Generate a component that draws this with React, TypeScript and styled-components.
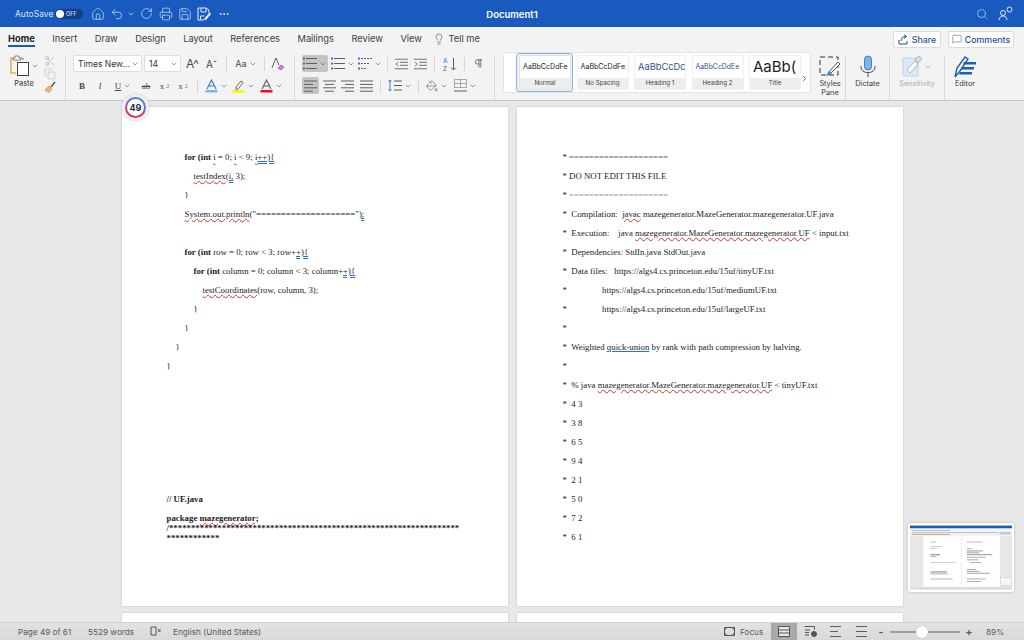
import React from 'react';
import styled, { createGlobalStyle } from 'styled-components';
import {
  House,
  Undo2,
  RotateCw,
  Printer,
  Save,
  Ellipsis,
  Search,
  Lightbulb,
  MessageSquare,
  Scissors,
  Copy,
  ChevronDown,
  ChevronRight,
  Pilcrow,
  PaintBucket,
} from 'lucide-react';

const Global = createGlobalStyle`
  html, body { margin: 0; padding: 0; background: #e8e8e8; }
  * { box-sizing: border-box; }
`;

const Window = styled.div`
  position: relative;
  display: flex;
  flex-direction: column;
  width: 1024px;
  height: 640px;
  overflow: hidden;
  font-family: Inter, 'Liberation Sans', sans-serif;
  color: #3a3a3a;
`;

const TitleBar = styled.div`
  display: flex;
  align-items: center;
  flex: 0 0 27px;
  padding-left: 15px;
  background: #185abd;
  color: #fff;
`;

const AutoSave = styled.span`
  font-size: 8.5px;
  color: #d5e1f3;
  width: 40px;
`;

const Toggle = styled.div`
  display: flex;
  align-items: center;
  width: 28px;
  height: 10px;
  padding-left: 1px;
  gap: 2px;
  border-radius: 5px;
  background: #123f86;
  color: #b9cbe8;
  font-size: 5.5px;
  font-weight: 600;
  margin-right: 5px;
`;

const Knob = styled.i`
  width: 8px;
  height: 8px;
  border-radius: 50%;
  background: #fff;
`;

const QuickButton = styled.div<{ $w?: number }>`
  display: flex;
  align-items: center;
  justify-content: center;
  width: ${(p) => p.$w ?? 19}px;
  color: #e4ecf8;
`;

const DocTitle = styled.div`
  position: absolute;
  left: 0;
  right: 0;
  top: 9px;
  text-align: center;
  font-size: 9.5px;
  font-weight: 600;
`;

const TitleRight = styled.div`
  display: flex;
  align-items: center;
  gap: 4px;
  margin-left: auto;
  padding-right: 7px;
`;

const TabBar = styled.div`
  display: flex;
  align-items: center;
  flex: 0 0 23px;
  padding: 0 10px 0 8px;
  background: #f3f3f3;
`;

const Tab = styled.div<{ $active?: boolean }>`
  position: relative;
  margin-right: 17.5px;
  font-size: 9.3px;
  font-weight: ${(p) => (p.$active ? 700 : 400)};
  color: ${(p) => (p.$active ? '#222' : '#404040')};
  line-height: 23px;
  &::after {
    content: '';
    display: ${(p) => (p.$active ? 'block' : 'none')};
    position: absolute;
    left: 0;
    right: 0;
    bottom: 3px;
    height: 2px;
    background: #1f5aa8;
  }
`;

const TellMe = styled.div`
  display: flex;
  align-items: center;
  gap: 3px;
  margin-left: -6px;
  font-size: 9.3px;
  color: #404040;
`;

const TabActions = styled.div`
  display: flex;
  gap: 7px;
  margin-left: auto;
  margin-top: 1px;
`;

const ActionButton = styled.div<{ $w: number }>`
  display: flex;
  align-items: center;
  justify-content: center;
  gap: 3px;
  width: ${(p) => p.$w}px;
  height: 17px;
  background: #fff;
  border: 1px solid #dcdcdc;
  border-radius: 2px;
  font-size: 8.8px;
  font-weight: 500;
  color: #1f4f93;
`;

const Ribbon = styled.div`
  display: flex;
  flex: 0 0 51px;
  background: #f3f3f3;
  border-bottom: 1px solid #c9c9c9;
`;

const Group = styled.div<{ $w: number; $pad?: number }>`
  display: flex;
  flex-direction: column;
  gap: 5px;
  width: ${(p) => p.$w}px;
  height: 45px;
  margin-top: 5px;
  padding-left: ${(p) => p.$pad ?? 0}px;
  border-right: 1px solid #d8d8d8;
`;

const PasteGroup = styled.div`
  display: flex;
  width: 66px;
  height: 45px;
  margin-top: 5px;
  border-right: 1px solid #d8d8d8;
`;

const PasteMain = styled.div`
  display: flex;
  flex-direction: column;
  align-items: center;
  width: 42px;
  padding-left: 6px;
  font-size: 7.5px;
  color: #333;
  gap: 3px;
`;

const PasteIconRow = styled.div`
  display: flex;
  align-items: center;
  gap: 1px;
`;

const ClipColumn = styled.div`
  display: flex;
  flex-direction: column;
  align-items: center;
  width: 16px;
  gap: 1px;
`;

const ToolRow = styled.div`
  display: flex;
  align-items: center;
  height: 17px;
`;

const FontSelect = styled.div<{ $w: number }>`
  display: flex;
  align-items: center;
  justify-content: space-between;
  width: ${(p) => p.$w}px;
  height: 17px;
  margin-right: 2px;
  padding: 0 2px 0 4px;
  background: #fff;
  border: 1px solid #dedede;
  border-radius: 2px;
  font-size: 8.5px;
  color: #333;
`;

const Tool = styled.div<{ $w: number; $on?: boolean; $serif?: boolean; $size?: number }>`
  display: flex;
  align-items: center;
  justify-content: center;
  gap: 2px;
  width: ${(p) => p.$w}px;
  height: 17px;
  background: ${(p) => (p.$on ? '#c4c4c4' : 'transparent')};
  border-radius: 2px;
  font-size: ${(p) => p.$size ?? 9}px;
  color: #4a4a4a;
  font-family: ${(p) => (p.$serif ? "'Liberation Serif', serif" : 'inherit')};
`;

const Bold = styled.b`
  font-weight: 700;
`;

const Slanted = styled.i`
  font-style: italic;
`;

const Script = styled.span`
  font-size: 6px;
  color: #2f7ad0;
`;

const Divider = styled.i<{ $m: number }>`
  flex: 0 0 1px;
  height: 14px;
  margin: 0 ${(p) => p.$m}px;
  background: #d4d4d4;
`;

const Gallery = styled.div`
  position: relative;
  display: flex;
  align-items: flex-start;
  gap: 7.5px;
  width: 308px;
  height: 41px;
  margin: 2px 4px 0 8px;
  padding: 3px 0 0 16px;
  background: #fff;
  border: 1px solid #e4e4e4;
  border-radius: 3px;
`;

const StyleCard = styled.div`
  position: relative;
  display: flex;
  flex-direction: column;
  flex: 0 0 50px;
  height: 33px;
  overflow: hidden;
  box-shadow: 0 0 1px #aaa;
`;

const SelectedRing = styled.div`
  position: absolute;
  left: 12px;
  top: 0;
  width: 57px;
  height: 39px;
  border: 1px solid #8fb0d8;
  border-radius: 3px;
  background: #e9f0f8;
`;

const Preview = styled.div<{ $size: number; $color?: string }>`
  flex: 0 0 22px;
  padding: 0 0 0 3px;
  background: #fff;
  font-size: ${(p) => p.$size}px;
  line-height: 22px;
  color: ${(p) => p.$color ?? '#222'};
  white-space: nowrap;
`;

const CardName = styled.div`
  flex: 1;
  background: #eeeeee;
  text-align: center;
  font-size: 6.2px;
  line-height: 10px;
  color: #444;
`;

const GalleryNext = styled.div`
  position: absolute;
  right: 1px;
  top: 14px;
  color: #444;
`;

const BigTool = styled.div<{ $w: number; $dim?: boolean; $edge?: boolean }>`
  display: flex;
  flex-direction: column;
  align-items: center;
  width: ${(p) => p.$w}px;
  height: 45px;
  margin-top: 5px;
  font-size: 7.3px;
  line-height: 9px;
  text-align: center;
  color: ${(p) => (p.$dim ? '#a9a9a9' : '#3a3a3a')};
  border-right: ${(p) => (p.$edge ? '1px solid #d8d8d8' : 'none')};
`;

const BigIcon = styled.div`
  display: flex;
  align-items: center;
  justify-content: center;
  height: 23px;
  margin-bottom: 1px;
`;

const DocArea = styled.div`
  flex: 1;
  min-height: 0;
  overflow: hidden;
  display: flex;
  flex-direction: column;
  align-items: center;
  gap: 7px;
  padding-top: 6px;
  background: #e8e8e8;
`;

const Spread = styled.div`
  display: flex;
  gap: 9px;
`;

const Page = styled.div<{ $h?: number; $left?: number }>`
  flex: 0 0 auto;
  width: 386px;
  height: ${(p) => p.$h ?? 499}px;
  padding: 41px 0 0 ${(p) => p.$left ?? 45}px;
  background: #fff;
  box-shadow: 0 0 2px #bdbdbd;
  font-family: 'Liberation Serif', serif;
  font-size: 8.8px;
  color: #1c1c1c;
`;

const Line = styled.div<{ $indent?: number; $bold?: boolean; $h?: number; $top?: number }>`
  height: ${(p) => p.$h ?? 19}px;
  margin-top: ${(p) => p.$top ?? 0}px;
  line-height: ${(p) => p.$h ?? 19}px;
  padding-left: ${(p) => (p.$indent ?? 0) * 9}px;
  font-weight: ${(p) => (p.$bold ? 700 : 400)};
  white-space: pre;
`;

const Spell = styled.span`
  text-decoration: underline wavy #d0342c;
  text-decoration-thickness: 0.7px;
  text-underline-offset: 1px;
`;

const Grammar = styled.span`
  text-decoration: underline double #2b6fd8;
  text-decoration-thickness: 0.7px;
  text-underline-offset: 1px;
`;

const Link = styled.span`
  text-decoration: underline #2b6fd8;
  text-underline-offset: 1px;
`;

const Rule = styled.span<{ $color: string }>`
  color: ${(p) => p.$color};
  letter-spacing: -0.02px;
`;

const StatusBar = styled.div`
  display: flex;
  align-items: center;
  flex: 0 0 18px;
  padding-left: 18px;
  background: linear-gradient(#e2e2e2, #d9d9d9);
  border-top: 1px solid #d0d0d0;
  font-size: 8.2px;
  color: #5a5a5a;
`;

const StatusText = styled.span<{ $w: number }>`
  width: ${(p) => p.$w}px;
  white-space: nowrap;
`;

const StatusRight = styled.div`
  display: flex;
  align-items: center;
  height: 100%;
  margin-left: auto;
`;

const FocusLabel = styled.div`
  display: flex;
  align-items: center;
  gap: 5px;
  width: 47px;
`;

const ViewButton = styled.div<{ $on?: boolean }>`
  display: flex;
  align-items: center;
  justify-content: center;
  width: 26px;
  height: 100%;
  background: ${(p) => (p.$on ? '#a9a9a9' : 'transparent')};
`;

const ZoomSlider = styled.div`
  position: relative;
  width: 70px;
  height: 2px;
  margin: 0 3px;
  background: #9c9c9c;
`;

const ZoomThumb = styled.i`
  position: absolute;
  left: 26px;
  top: -5px;
  width: 12px;
  height: 12px;
  border-radius: 50%;
  background: #fff;
  box-shadow: 0 0 1px #999;
`;

const ZoomValue = styled.span`
  width: 38px;
  margin-left: 11px;
`;

const ZoomSign = styled.span`
  font-size: 11px;
  font-weight: 600;
  width: 12px;
  text-align: center;
`;

const PageBadge = styled.div`
  position: absolute;
  left: 122px;
  top: 94px;
  display: flex;
  align-items: center;
  justify-content: center;
  width: 27px;
  height: 27px;
  border-radius: 50%;
  background: #f0f0f0;
  box-shadow: 0 0 2px #bbb;
`;

const BadgeGrip = styled.i`
  position: absolute;
  left: 0;
  bottom: 0;
  width: 3px;
  height: 4px;
  background-image: radial-gradient(#888 0.5px, transparent 0.6px);
  background-size: 2px 2px;
`;

const BadgeRing = styled.div`
  display: flex;
  align-items: center;
  justify-content: center;
  width: 21px;
  height: 21px;
  border-radius: 50%;
  background: conic-gradient(#4f7fe0 0 25%, #e0355a 35% 70%, #6a6fd8 85%, #4f7fe0);
`;

const BadgeCore = styled.div`
  width: 17px;
  height: 17px;
  border-radius: 50%;
  background: #fff;
  text-align: center;
  font-size: 9px;
  font-weight: 700;
  line-height: 17px;
  color: #222a44;
`;

const Thumbnail = styled.div`
  position: absolute;
  left: 908px;
  top: 523px;
  width: 106px;
  height: 69px;
  padding: 2px;
  background: #fff;
  box-shadow: 0 0 3px #b5b5b5;
  border-radius: 2px;
`;

const ink = '#5e5e5e';

function Bars({ x = 0, rows, dots, dash }: { x?: number; rows: number[]; dots?: string; dash?: boolean }) {
  return (
    <svg width="14" height="13" viewBox="0 0 14 13" fill="none">
      {rows.map((w, i) => (
        <line key={i} x1={x} x2={x + w} y1={1.5 + i * (10 / (rows.length - 1))} y2={1.5 + i * (10 / (rows.length - 1))} stroke={ink} strokeWidth="1" strokeDasharray={dash ? '2 1' : undefined} />
      ))}
      {dots && [1.5, 6.5, 11.5].map((y) => <rect key={y} x="0" y={y - 1} width="2" height="2" fill={dots} />)}
    </svg>
  );
}

const Chev = () => <ChevronDown size={8} strokeWidth={1.6} color="#444" />;

function AlignIcon({ kind }: { kind: 'left' | 'center' | 'right' | 'full' }) {
  const rows = [13, 9, 13, 9];
  return (
    <svg width="13" height="12" viewBox="0 0 13 12">
      {rows.map((w, i) => {
        const width = kind === 'full' ? 13 : w;
        const x = kind === 'left' || kind === 'full' ? 0 : kind === 'center' ? (13 - width) / 2 : 13 - width;
        return <rect key={i} x={x} y={0.5 + i * 3.4} width={width} height="1" fill={ink} />;
      })}
    </svg>
  );
}

function IndentIcon({ back }: { back?: boolean }) {
  return (
    <svg width="13" height="12" viewBox="0 0 15 12" fill="none" stroke={ink}>
      <path d="M0 .5h15M6 4h9M6 7.500h9M0 11.500h15" />
      <path d={back ? 'M4 3.500 1 6l3 2.500' : 'M1 3.500 4 6 1 8.500'} stroke="#2f7ad0" />
    </svg>
  );
}

function ColorA({ bar, stroke }: { bar: string; stroke?: string }) {
  return (
    <svg width="13" height="14" viewBox="0 0 13 14" fill="none">
      <path d="M2 10 6.500 1 11 10M3.800 7h5.400" stroke={stroke ?? ink} strokeWidth="1.100" />
      <rect x="0.500" y="11" width="12" height="2.500" fill={bar} />
    </svg>
  );
}

function HighlightPen() {
  return (
    <svg width="13" height="14" viewBox="0 0 13 14" fill="none">
      <path d="m4 8 5-6 2 1.500-4.500 6.200L4 10.500z" stroke={ink} strokeWidth=".9" />
      <rect x="0.500" y="11.200" width="12" height="2.500" fill="#fff200" />
    </svg>
  );
}

function PasteIcon() {
  return (
    <svg width="20" height="21" viewBox="0 0 20 21" fill="none">
      <path d="M5 3H1v15h5" stroke="#e8912d" strokeWidth="1.200" />
      <path d="M5 3V1h4v2h2v2H3V3z M11 3h2v2" stroke="#777" strokeWidth=".9" fill="#fff" />
      <rect x="7.500" y="7.500" width="11" height="13" fill="#fff" stroke="#444" />
    </svg>
  );
}

function BrushIcon() {
  return (
    <svg width="12" height="12" viewBox="0 0 12 12" fill="none">
      <path d="M1 9 5 5l3 3-3 3.500z" fill="#f2b27a" stroke="#e8862d" strokeWidth=".8" />
      <path d="m7 6 4-5" stroke="#555" strokeWidth="1.400" />
    </svg>
  );
}

function SaveAsIcon() {
  return (
    <svg width="14" height="14" viewBox="0 0 14 14" fill="none" stroke="#e4ecf8">
      <path d="M1 1h8l3 2v3M1 1v12h6M4 1v4h5V1M3.500 13V9h4" />
      <path d="m7.500 12 5-6 1 1-5 6z" fill="#e4ecf8" />
    </svg>
  );
}

function PeopleIcon() {
  return (
    <svg width="16" height="15" viewBox="0 0 16 15" fill="none" stroke="#e4ecf8">
      <circle cx="5" cy="7" r="2.500" />
      <path d="M1 14c.5-3 2-4 4-4s3.500 1 4 4" />
      <circle cx="11.500" cy="3.500" r="2.500" />
    </svg>
  );
}

function ShareIcon() {
  return (
    <svg width="11" height="11" viewBox="0 0 11 11" fill="none" stroke="#1f4f93">
      <path d="M1 6v4h8V7" />
      <path d="M3 7c0-3 2-4.500 5-4.500M6 .5l2.500 2L6 4.500" />
    </svg>
  );
}

function ClearFormat() {
  return (
    <svg width="14" height="14" viewBox="0 0 14 14" fill="none">
      <path d="M1 11 5 1l3 7" stroke={ink} />
      <path d="m7 11 3-3 3 2-3 3z" fill="#d97ad8" stroke="#a44fb0" strokeWidth=".7" />
    </svg>
  );
}

function SortIcon() {
  return (
    <svg width="15" height="14" viewBox="0 0 15 14" fill="none">
      <text x="0" y="6" fontSize="6.500" fontFamily="Inter" fill="#2f7ad0">A</text>
      <text x="0" y="13.500" fontSize="6.500" fontFamily="Inter" fill={ink}>Z</text>
      <path d="M10.500 1v12M8 10.500l2.500 2.500 2.500-2.500" stroke={ink} />
    </svg>
  );
}

function LineSpacing() {
  return (
    <svg width="14" height="13" viewBox="0 0 14 13" fill="none">
      <path d="M2 1v11M.5 2.500 2 1l1.500 1.500M.5 10.500 2 12l1.500-1.500" stroke="#2f7ad0" />
      <path d="M6 2h8M6 6.500h8M6 11h8" stroke={ink} />
    </svg>
  );
}

function BordersIcon() {
  return (
    <svg width="13" height="13" viewBox="0 0 13 13" fill="none" stroke={ink}>
      <path d="M.5.500h12v8H.5zM.5 4.500h12M6.500.500v8" strokeDasharray="1 1" />
      <path d="M0 12h13" />
    </svg>
  );
}

function StylesPaneIcon() {
  return (
    <svg width="22" height="21" viewBox="0 0 22 21" fill="none">
      <path d="M1 1h18v18H1z" stroke="#333" strokeDasharray="5 3" />
      <path d="m9 17 10-11 2 2-10 10z" fill="#fff" stroke="#555" />
      <path d="m7 20 3-5 3 3z" fill="#2f86d6" />
    </svg>
  );
}

function MicIcon() {
  return (
    <svg width="16" height="23" viewBox="0 0 16 23" fill="none">
      <rect x="4.500" y="1" width="7" height="14" rx="3.500" fill="#7fb6e6" stroke="#3d7fc0" />
      <path d="M1 11c0 5 3 6.500 7 6.500s7-1.500 7-6.500M8 17.500V22" stroke="#444" />
    </svg>
  );
}

function SensitivityIcon() {
  return (
    <svg width="30" height="23" viewBox="0 0 30 23" fill="none">
      <path d="M1 3h15v18H1z" fill="#dbe9f6" stroke="#bcd3ea" />
      <path d="m5 15 8-9 3 3-8 9z" fill="#fff" stroke="#b5b5b5" />
      <path d="m13 4 4-3 3 3-4 4z" fill="#cde0f2" stroke="#b5b5b5" />
      <path d="m24 11 2 2 2-2" stroke="#aaa" />
    </svg>
  );
}

function EditorIcon() {
  return (
    <svg width="24" height="24" viewBox="0 0 24 24" fill="none">
      <path d="M2 22 4 13 12 2l3 2-8 12z" stroke="#1e5fb4" strokeWidth="1.400" />
      <path d="M11 7h12v2.500H10zM9 12h12v2.500H8zM7 17h12v2.500H6z" fill="#1e5fb4" />
    </svg>
  );
}

function FocusIcon() {
  return (
    <svg width="11" height="9" viewBox="0 0 11 9" fill="none" stroke="#555">
      <path d="M.5.500h10v8H.5z" />
      <path d="M0 2h2V0M9 0v2h2M0 7h2v2M9 9V7h2" />
    </svg>
  );
}

function ImmersiveIcon() {
  return (
    <svg width="11" height="10" viewBox="0 0 11 10" fill="none" stroke="#555">
      <path d="M6 1H1v8h5V1M6 1h-.5M6 9h-.5" />
      <path d="m8 3 2.500 3M10.500 3 8 6" />
    </svg>
  );
}

function PrintLayoutIcon() {
  return (
    <svg width="12" height="11" viewBox="0 0 12 11" fill="none" stroke="#fff">
      <rect x=".5" y=".5" width="11" height="10" fill="#e6e6e6" stroke="#555" />
      <path d="M1 4h10M1 7h10" stroke="#555" />
    </svg>
  );
}

function WebLayoutIcon() {
  return (
    <svg width="13" height="11" viewBox="0 0 13 11" fill="none" stroke="#555">
      <path d="M.5.500h10v3M1 4h5M1 6.500h4M1 9h4" />
      <circle cx="10" cy="8" r="2.500" fill="#555" />
    </svg>
  );
}

// tiny picture of the window, one mark per line of text
const thumbLeft = [
  [32, 25, 9, '#a8b4d8'],
  [32, 32, 17, '#c8c8c8'],
  [32, 35, 11, '#c8c8c8'],
  [32, 45, 15, '#777'],
  [32, 48, 9, '#9aa6c8'],
  [32, 57, 40, '#d0c4c8'],
  [32, 72, 26, '#777'],
  [32, 75, 28, '#aaa'],
  [32, 83, 35, '#b8a8a8'],
] as const;

const thumbRight = [
  [89, 25, 25, '#c9a8b0'],
  [89, 35, 8, '#aaa'],
  [89, 39, 25, '#888'],
  [89, 42, 20, '#999'],
  [89, 45, 40, '#8a8a8a'],
  [89, 49, 30, '#aaa'],
  [89, 53, 18, '#b89098'],
  [94, 57, 18, '#c09aa2'],
  [89, 68, 14, '#999'],
  [89, 71, 20, '#999'],
  [89, 74, 36, '#999'],
  [89, 83, 30, '#a8a0c0'],
  [89, 87, 22, '#c09aa2'],
] as const;

function Thumb() {
  return (
    <svg width="102" height="65" viewBox="0 0 160 100">
      <rect width="160" height="100" fill="#e8e8e8" />
      <rect width="160" height="4.500" fill="#185abd" />
      <rect y="4.500" width="160" height="11.500" fill="#f3f3f3" />
      <rect x="3" y="7" width="60" height="1.200" fill="#b0b0b0" />
      <rect x="3" y="10" width="135" height="1.500" fill="#c0c0c0" />
      <rect x="3" y="13" width="60" height="1.500" fill="#b8a890" />
      <rect x="140" y="10" width="18" height="4" fill="#b8c8e0" />
      <rect x="21" y="16" width="59" height="80" fill="#fff" />
      <rect x="81" y="16" width="60" height="80" fill="#fff" />
      {thumbLeft.map(([x, y, w, c]) => <rect key={y} x={x} y={y} width={w} height="1.400" fill={c} />)}
      {thumbRight.map(([x, y, w, c]) => <rect key={y} x={x} y={y} width={w} height="1.400" fill={c} />)}
      <rect x="142" y="81" width="17" height="13" fill="#f6f6f6" stroke="#9cc0e8" strokeWidth=".6" />
      <rect y="97" width="160" height="3" fill="#d8d8d8" />
    </svg>
  );
}

const eq = '====================';

export default function App() {
  return (
    <Window>
      <Global />
      <TitleBar>
        <AutoSave>AutoSave</AutoSave>
        <Toggle>
          <Knob />
          OFF
        </Toggle>
        <QuickButton $w={19}><House size={14} strokeWidth={1.1} /></QuickButton>
        <QuickButton $w={19}><Undo2 size={14} strokeWidth={1.2} /></QuickButton>
        <QuickButton $w={10}><ChevronDown size={8} /></QuickButton>
        <QuickButton $w={20}><RotateCw size={13} strokeWidth={1.2} /></QuickButton>
        <QuickButton $w={19}><Printer size={14} strokeWidth={1.1} /></QuickButton>
        <QuickButton $w={19}><Save size={14} strokeWidth={1.1} /></QuickButton>
        <QuickButton $w={19}><SaveAsIcon /></QuickButton>
        <QuickButton $w={21}><Ellipsis size={12} /></QuickButton>
        <DocTitle>Document1</DocTitle>
        <TitleRight>
          <QuickButton $w={18}><Search size={12} strokeWidth={1.2} /></QuickButton>
          <QuickButton $w={22}><PeopleIcon /></QuickButton>
        </TitleRight>
      </TitleBar>

      <TabBar>
        <Tab $active>Home</Tab>
        <Tab>Insert</Tab>
        <Tab>Draw</Tab>
        <Tab>Design</Tab>
        <Tab>Layout</Tab>
        <Tab>References</Tab>
        <Tab>Mailings</Tab>
        <Tab>Review</Tab>
        <Tab>View</Tab>
        <TellMe>
          <Lightbulb size={12} strokeWidth={1.1} />
          Tell me
        </TellMe>
        <TabActions>
          <ActionButton $w={48}><ShareIcon />Share</ActionButton>
          <ActionButton $w={66}><MessageSquare size={10} strokeWidth={1.2} />Comments</ActionButton>
        </TabActions>
      </TabBar>

      <Ribbon>
        <PasteGroup>
          <PasteMain>
            <PasteIconRow><PasteIcon /><Chev /></PasteIconRow>
            Paste
          </PasteMain>
          <ClipColumn>
            <Scissors size={12} strokeWidth={1} color="#7f9fb8" />
            <Copy size={12} strokeWidth={1} color="#aaa" />
            <BrushIcon />
          </ClipColumn>
        </PasteGroup>

        <Group $w={229} $pad={7}>
          <ToolRow>
            <FontSelect $w={69}>Times New...<Chev /></FontSelect>
            <FontSelect $w={37}>14<Chev /></FontSelect>
            <Tool $w={19} $size={12}>A^</Tool>
            <Tool $w={19} $size={10}>Aˇ</Tool>
            <Divider $m={5} />
            <Tool $w={28}>Aa<Chev /></Tool>
            <Divider $m={4} />
            <Tool $w={18}><ClearFormat /></Tool>
          </ToolRow>
          <ToolRow>
            <Tool $w={18} $serif><Bold>B</Bold></Tool>
            <Tool $w={18} $serif><Slanted>I</Slanted></Tool>
            <Tool $w={28} $serif><u>U</u><Chev /></Tool>
            <Tool $w={18} $serif><s>ab</s></Tool>
            <Tool $w={19} $serif>x<sub><Script>2</Script></sub></Tool>
            <Tool $w={18} $serif>x<sup><Script>2</Script></sup></Tool>
            <Divider $m={5} />
            <Tool $w={27}><ColorA bar="#7fb8ea" stroke="#2f7ad0" /><Chev /></Tool>
            <Tool $w={27}><HighlightPen /><Chev /></Tool>
            <Tool $w={28}><ColorA bar="#e81123" /><Chev /></Tool>
          </ToolRow>
        </Group>

        <Group $w={200} $pad={7}>
          <ToolRow>
            <Tool $w={26} $on><Bars x={3} rows={[11, 11, 11]} dots="#2f7ad0" /><Chev /></Tool>
            <Tool $w={2} />
            <Tool $w={26}><Bars x={3} rows={[11, 11, 11]} dots="#2f7ad0" /><Chev /></Tool>
            <Tool $w={1} />
            <Tool $w={26}><Bars x={3} rows={[11, 8, 6]} dots="#2f7ad0" dash /><Chev /></Tool>
            <Divider $m={4} />
            <Tool $w={19}><IndentIcon back /></Tool>
            <Tool $w={19}><IndentIcon /></Tool>
            <Divider $m={4} />
            <Tool $w={22}><SortIcon /></Tool>
            <Divider $m={3} />
            <Tool $w={21}><Pilcrow size={11} strokeWidth={1.6} /></Tool>
          </ToolRow>
          <ToolRow>
            <Tool $w={17} $on><AlignIcon kind="left" /></Tool>
            <Tool $w={1} />
            <Tool $w={18}><AlignIcon kind="center" /></Tool>
            <Tool $w={19}><AlignIcon kind="right" /></Tool>
            <Tool $w={18}><AlignIcon kind="full" /></Tool>
            <Divider $m={5} />
            <Tool $w={28}><LineSpacing /><Chev /></Tool>
            <Divider $m={4} />
            <Tool $w={28}><PaintBucket size={12} strokeWidth={1.1} /><Chev /></Tool>
            <Tool $w={28}><BordersIcon /><Chev /></Tool>
          </ToolRow>
        </Group>

        <Gallery>
          <SelectedRing />
          <StyleCard>
            <Preview $size={7.1}>AaBbCcDdFe</Preview>
            <CardName>Normal</CardName>
          </StyleCard>
          <StyleCard>
            <Preview $size={7.1}>AaBbCcDdFe</Preview>
            <CardName>No Spacing</CardName>
          </StyleCard>
          <StyleCard>
            <Preview $size={9.3} $color="#2f5496">AaBbCcDc</Preview>
            <CardName>Heading 1</CardName>
          </StyleCard>
          <StyleCard>
            <Preview $size={6.9} $color="#2f5496">AaBbCcDdEe</Preview>
            <CardName>Heading 2</CardName>
          </StyleCard>
          <StyleCard>
            <Preview $size={15}>AaBb(</Preview>
            <CardName>Title</CardName>
          </StyleCard>
          <GalleryNext><ChevronRight size={9} /></GalleryNext>
        </Gallery>

        <BigTool $w={31} $edge>
          <BigIcon><StylesPaneIcon /></BigIcon>
          Styles<br />Pane
        </BigTool>
        <BigTool $w={44} $edge>
          <BigIcon><MicIcon /></BigIcon>
          Dictate
        </BigTool>
        <BigTool $w={55} $dim $edge>
          <BigIcon><SensitivityIcon /></BigIcon>
          Sensitivity
        </BigTool>
        <BigTool $w={40}>
          <BigIcon><EditorIcon /></BigIcon>
          Editor
        </BigTool>
      </Ribbon>

      <DocArea>
        <Spread>
          <Page>
            <Line $indent={2}><Bold>for (int</Bold> <Spell>i</Spell> = 0; <Spell>i</Spell> &lt; 9; <Spell>i</Spell><Grammar>++){'{'}</Grammar></Line>
            <Line $indent={3}><Spell>testIndex</Spell>(<Grammar>i,</Grammar> 3);</Line>
            <Line $indent={2}>{'}'}</Line>
            <Line $indent={2}><Spell>System.out.println</Spell>("{eq}"<Grammar>);</Grammar></Line>
            <Line />
            <Line $indent={2}><Bold>for (int</Bold> row = 0; row &lt; 3; row+<Grammar>+){'{'}</Grammar></Line>
            <Line $indent={3}><Bold>for (int</Bold> column = 0; column &lt; 3; column+<Grammar>+){'{'}</Grammar></Line>
            <Line $indent={4}><Spell>testCoordinates</Spell>(row, column, 3);</Line>
            <Line $indent={3}>{'}'}</Line>
            <Line $indent={2}>{'}'}</Line>
            <Line $indent={1}>{'}'}</Line>
            <Line>{'}'}</Line>
            <Line /><Line /><Line /><Line /><Line /><Line />
            <Line $bold>// UF.java</Line>
            <Line $bold $h={9} $top={4.5}>package <Spell>mazegenerator;</Spell></Line>
            <Line $bold $h={10}>/*{'*'.repeat(65)}</Line>
            <Line $bold $h={10}>{'*'.repeat(12)}</Line>
          </Page>
          <Page $left={46}>
            <Line>* <Rule $color="#666">{eq}</Rule></Line>
            <Line>* DO NOT EDIT THIS FILE</Line>
            <Line>* <Rule $color="#999">{eq}</Rule></Line>
            <Line>*  Compilation:  <Spell>javac</Spell> mazegenerator.MazeGenerator.mazegenerator.UF.java</Line>
            <Line>*  Execution:    java <Spell>mazegenerator.MazeGenerator.mazegenerator.UF</Spell> &lt; input.txt</Line>
            <Line>*  Dependencies: StdIn.java StdOut.java</Line>
            <Line>*  Data files:   https://algs4.cs.princeton.edu/15uf/tinyUF.txt</Line>
            <Line>*                https://algs4.cs.princeton.edu/15uf/mediumUF.txt</Line>
            <Line>*                https://algs4.cs.princeton.edu/15uf/largeUF.txt</Line>
            <Line>*</Line>
            <Line>*  Weighted <Link>quick-union</Link> by rank with path compression by halving.</Line>
            <Line>*</Line>
            <Line>*  % java <Spell>mazegenerator.MazeGenerator.mazegenerator.UF</Spell> &lt; tinyUF.txt</Line>
            <Line>*  4 3</Line>
            <Line>*  3 8</Line>
            <Line>*  6 5</Line>
            <Line>*  9 4</Line>
            <Line>*  2 1</Line>
            <Line>*  5 0</Line>
            <Line>*  7 2</Line>
            <Line>*  6 1</Line>
          </Page>
        </Spread>
        <Spread>
          <Page />
          <Page />
        </Spread>
      </DocArea>

      <StatusBar>
        <StatusText $w={70}>Page 49 of 61</StatusText>
        <StatusText $w={62}>5529 words</StatusText>
        <StatusText $w={23}><ImmersiveIcon /></StatusText>
        <StatusText $w={100}>English (United States)</StatusText>
        <StatusRight>
          <FocusLabel><FocusIcon />Focus</FocusLabel>
          <ViewButton $on><PrintLayoutIcon /></ViewButton>
          <ViewButton><WebLayoutIcon /></ViewButton>
          <ViewButton><Bars x={1} rows={[11, 8, 11]} /></ViewButton>
          <ViewButton><Bars x={1} rows={[11, 11, 11]} /></ViewButton>
          <ZoomSign>-</ZoomSign>
          <ZoomSlider><ZoomThumb /></ZoomSlider>
          <ZoomSign>+</ZoomSign>
          <ZoomValue>89%</ZoomValue>
        </StatusRight>
      </StatusBar>

      <PageBadge>
        <BadgeGrip />
        <BadgeRing>
          <BadgeCore>49</BadgeCore>
        </BadgeRing>
      </PageBadge>
      <Thumbnail><Thumb /></Thumbnail>
    </Window>
  );
}
